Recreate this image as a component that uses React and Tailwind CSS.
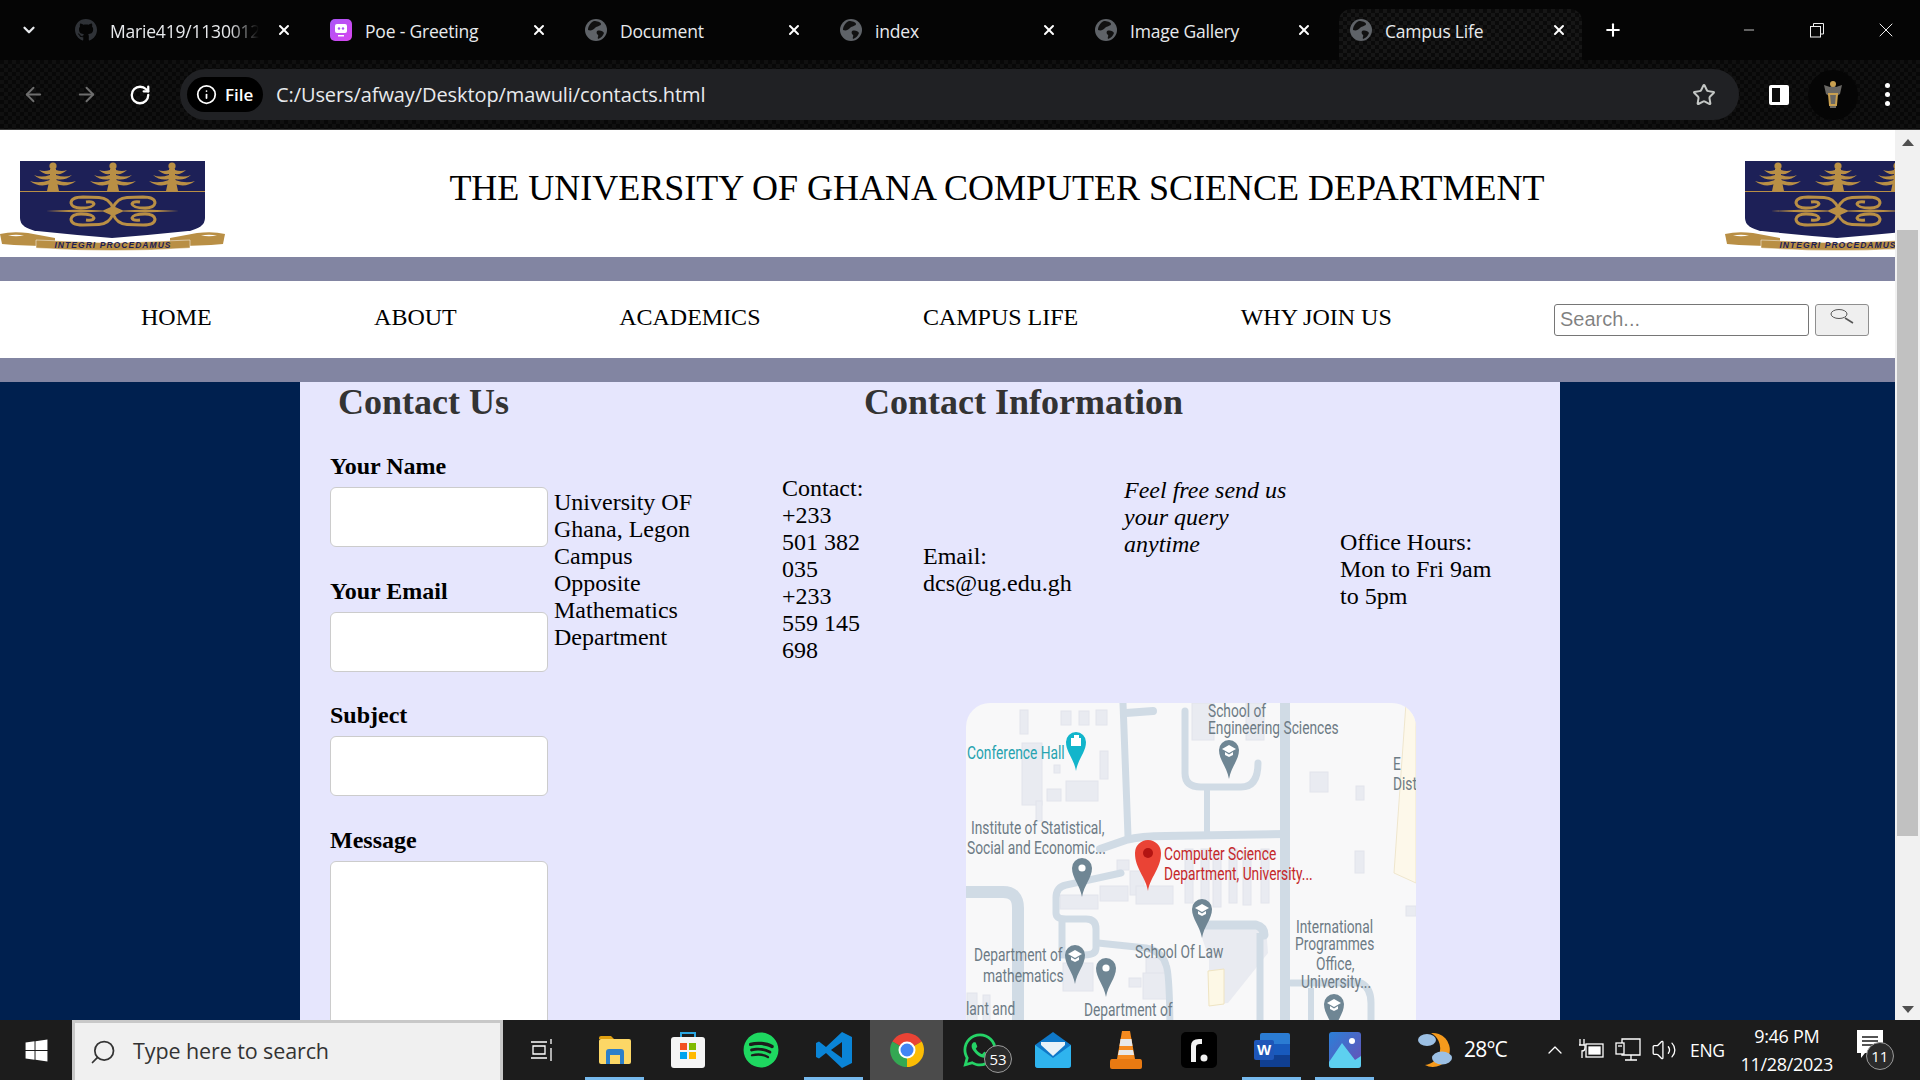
import React from 'react';
import { FaGithub, FaSpotify, FaWhatsapp, FaWindows } from 'react-icons/fa';
import { ArrowLeft, ArrowRight, RotateCw, X, Plus, Star, Minus, ChevronDown, ChevronUp, Search, Info, Volume2 } from 'lucide-react';

const Globe = () => (
  <svg width="22" height="22" viewBox="0 0 22 22">
    <circle cx="11" cy="11" r="11" fill="#5f6368" />
    <path d="M9 2c3 0 7 1 7 3s-4 2-6 4c-2 2-4 3-7 2 0-4 3-8 6-9zM12 12c3-1 6 0 7 2-1 3-3 5-6 6-1-2 1-3 0-4-1-1-2-2-1-4z" fill="#111" />
  </svg>
);

const PoeIcon = () => (
  <svg width="22" height="22" viewBox="0 0 22 22">
    <defs>
      <linearGradient id="poeg" x1="0" y1="0" x2="1" y2="1">
        <stop offset="0" stopColor="#a855f7" />
        <stop offset="1" stopColor="#d946ef" />
      </linearGradient>
    </defs>
    <rect width="22" height="22" rx="5" fill="url(#poeg)" />
    <rect x="5" y="5" width="12" height="9" rx="2" fill="#fff" />
    <circle cx="9" cy="9.5" r="1.2" fill="#a855f7" />
    <circle cx="13" cy="9.5" r="1.2" fill="#a855f7" />
    <path d="M8 16h6v1.5H8z" fill="#fff" />
  </svg>
);

const tabs = [
  { title: 'Marie419/1130012', icon: <FaGithub size={24} color="#2f3237" />, fade: true },
  { title: 'Poe - Greeting', icon: <PoeIcon /> },
  { title: 'Document', icon: <Globe /> },
  { title: 'index', icon: <Globe /> },
  { title: 'Image Gallery', icon: <Globe /> },
  { title: 'Campus Life', icon: <Globe />, active: true },
];

const TabBar = () => (
  <div className="flex h-[60px] shrink-0 items-end bg-[#050505] text-[#e8eaed]">
    <div className="flex h-[51px] w-[64px] shrink-0 items-center justify-center pb-[9px] pr-[6px]">
      <ChevronDown size={18} strokeWidth={3} />
    </div>
    {tabs.map((tab) => (
      <div key={tab.title} className={`mr-[12px] flex h-[51px] w-[243px] shrink-0 items-center rounded-t-xl pb-[9px] pl-[11px] ${tab.active ? 'bg-[repeating-conic-gradient(#161616_0_25%,#0a0a0a_0_50%)] bg-[length:8px_8px]' : ''}`}>
        <div className="flex w-[22px] shrink-0 justify-center">{tab.icon}</div>
        <span className={`ml-[13px] mt-[2px] w-[149px] overflow-hidden whitespace-nowrap font-['Open_Sans',sans-serif] text-[17.5px] tracking-[-0.2px] ${tab.fade ? '[mask-image:linear-gradient(to_right,#000_80%,transparent)]' : ''}`}>{tab.title}</span>
        <X size={16} strokeWidth={3} className="ml-[17px] text-white" />
      </div>
    ))}
    <div className="flex h-[51px] items-center pb-[9px] pl-[9px] pr-[117px] text-white">
      <Plus size={20} strokeWidth={2.5} />
    </div>
    <div className="flex h-[60px] items-center text-[#eeeeee]">
      <Minus size={16} strokeWidth={1.2} className="ml-[1px]" />
      <svg width="16" height="16" viewBox="0 0 16 16" className="ml-[52px]" fill="none" stroke="currentColor">
        <rect x="1.5" y="4.5" width="10" height="10.5" />
        <path d="M4.5 4.5V1.5h10v10.5h-3" />
      </svg>
      <X size={24} strokeWidth={1} className="ml-[49px]" />
    </div>
  </div>
);

const Toolbar = () => (
  <div className="flex h-[70px] shrink-0 items-start border-b border-[#3a3a3a] bg-[repeating-conic-gradient(#101010_0_25%,#080808_0_50%)] bg-[length:8px_8px] pt-[9px] text-[#e8eaed]">
    <div className="flex h-[51px] items-center">
      <ArrowLeft size={23} className="ml-[22px] text-[#6e6e6e]" />
      <ArrowRight size={23} className="ml-[30px] text-[#6e6e6e]" />
      <RotateCw size={22} strokeWidth={2.5} className="ml-[31px] text-white" />
    </div>
    <div className="ml-[29px] flex h-[51px] w-[1559px] items-center rounded-full bg-[#202124] pl-[7px] pr-[23px]">
      <div className="flex h-[35px] w-[76px] items-center rounded-full bg-black pl-[9px] text-white">
        <Info size={21} />
        <span className="ml-[8px] font-['Open_Sans',sans-serif] text-[17px] font-semibold">File</span>
      </div>
      <span className="ml-[13px] font-['Open_Sans',sans-serif] text-[20px] tracking-[-0.09px]">C:/Users/afway/Desktop/mawuli/contacts.html</span>
      <Star size={24} strokeWidth={2} className="ml-auto text-[#c4c7c5]" />
    </div>
    <div className="flex h-[51px] items-center">
      <svg width="22" height="22" viewBox="0 0 22 22" className="ml-[29px]">
        <rect x="1" y="1" width="20" height="20" rx="2" fill="#fff" />
        <rect x="4" y="4" width="8" height="14" fill="#0c0c0c" />
      </svg>
      <div className="ml-[18px] flex h-[50px] w-[50px] items-center justify-center rounded-full bg-[#050505]">
        <svg width="24" height="32" viewBox="0 0 24 32">
          <path d="M3 6l6 2 3-2 3 2 6-2-2 9-3 2-1 12h-6l-1-12-3-2z" fill="#6a6864" />
          <circle cx="12" cy="5" r="3" fill="#c9a050" />
          <path d="M8 15h8l-1 11h-6z" fill="none" stroke="#c9a050" strokeWidth="2" />
        </svg>
      </div>
      <div className="ml-[27px] flex flex-col gap-[4px]">
        <span className="h-[5px] w-[5px] rounded-full bg-white" />
        <span className="h-[5px] w-[5px] rounded-full bg-white" />
        <span className="h-[5px] w-[5px] rounded-full bg-white" />
      </div>
    </div>
  </div>
);

const Tree = ({ x }) => (
  <g transform={`translate(${x} 0)`} fill="#b98f45">
    <circle cx="0" cy="5" r="3.6" />
    <path d="M-6 30 L-3 16 L-3 8 L3 8 L3 16 L6 30 Z" />
    <path d="M-3 9 Q-9 11 -14 9 Q-9 14 -3 13 Z M3 9 Q9 11 14 9 Q9 14 3 13 Z" />
    <path d="M-3 14 Q-12 17 -19 14 Q-12 20 -3 18 Z M3 14 Q12 17 19 14 Q12 20 3 18 Z" />
    <path d="M-3 19 Q-14 23 -23 20 Q-14 27 -3 23 Z M3 19 Q14 23 23 20 Q14 27 3 23 Z" />
  </g>
);

const Swirl = ({ sx, sy }) => (
  <g transform={`translate(113 50) scale(${sx} ${sy})`} fill="none" stroke="#b98f45" strokeWidth="3">
    <path d="M0 -3Q4 -13 14 -13.5L30 -14Q42 -14 42 -8Q41 -3 32 -3Q20 -3 19 -7Q20 -10 27 -9" />
  </g>
);

const Crest = () => (
  <svg width="225" height="90" viewBox="0 0 225 90" className="block shrink-0">
    <path d="M20 0H205V57Q205 67 188 70Q150 74 112 77Q75 74 37 70Q20 67 20 57Z" fill="#1d2057" />
    <rect x="20" y="30" width="185" height="1" fill="#b98f45" />
    <Tree x={53} />
    <Tree x={113} />
    <Tree x={172} />
    <Swirl sx={1} sy={1} />
    <Swirl sx={-1} sy={1} />
    <Swirl sx={1} sy={-1} />
    <Swirl sx={-1} sy={-1} />
    <path d="M46 50L80 48.5L103 49.5L113 45L123 49.5L146 48.5L179 50L146 51.5L123 50.5L113 55L103 50.5L80 51.5Z" fill="#b98f45" />
    <path d="M0 73Q12 70 28 72L55 77V85Q25 85 2 83Z" fill="#b98f45" />
    <path d="M225 73Q213 70 197 72L170 77V85Q200 85 223 83Z" fill="#b98f45" />
    <path d="M8 74.5Q16 73 24 74.5Q16 76 8 74.5ZM201 74.5Q209 73 217 74.5Q209 76 201 74.5Z" fill="#fff" />
    <path d="M36 79L113 82L190 79V87Q113 92 36 87Z" fill="#b98f45" stroke="#fff" strokeWidth="0.5" />
    <text x="113" y="87" textAnchor="middle" fontFamily="Liberation Sans, sans-serif" fontSize="8.5" fontWeight="700" fontStyle="italic" letterSpacing="1.05" fill="#1d2057">INTEGRI PROCEDAMUS</text>
  </svg>
);

const Bar = () => <div className="h-[24px] shrink-0 bg-[#8285a2]" />;

const navItems = ['HOME', 'ABOUT', 'ACADEMICS', 'CAMPUS LIFE', 'WHY JOIN US'];

const Nav = () => (
  <div className="flex h-[77px] shrink-0 items-center bg-white pb-[5px] pl-[141px] pr-[26px]">
    <div className="flex gap-[162.4px] text-[24px] text-black">
      {navItems.map((item) => (
        <span key={item} className="whitespace-nowrap">{item}</span>
      ))}
    </div>
    <div className="ml-auto mt-[5px] flex gap-[6px]">
      <input placeholder="Search..." className="h-[32px] w-[255px] rounded-[3px] border border-[#767676] bg-white px-[5px] font-['Liberation_Sans',sans-serif] text-[20px]" />
      <div className="flex h-[32px] w-[54px] items-start justify-center rounded-[3px] border border-[#8f8f8f] bg-[#efefef] pt-[4px]">
        <svg width="24" height="15" viewBox="0 0 24 15" fill="none" stroke="#555555" strokeWidth="1">
          <ellipse cx="9" cy="5" rx="8" ry="4.5" />
          <path d="M15 9L23 14" strokeWidth="1.5" />
        </svg>
      </div>
    </div>
  </div>
);

const fields = ['Your Name', 'Your Email', 'Subject'];

const ContactForm = () => (
  <div className="w-[224px] shrink-0">
    <h2 className="ml-[8px] whitespace-nowrap text-[36px] font-bold leading-[37px] text-[#333333]">Contact Us</h2>
    <div className="mt-[32px]">
      {fields.map((label) => (
        <div key={label} className="mb-[30.5px]">
          <div className="mb-[7px] text-[24px] font-bold leading-[27px] text-black">{label}</div>
          <div className="h-[60px] w-[218px] rounded-[6px] border border-[#cccccc] bg-white" />
        </div>
      ))}
      <div className="mb-[7px] text-[24px] font-bold leading-[27px] text-black">Message</div>
      <div className="h-[240px] w-[218px] rounded-[6px] border border-[#cccccc] bg-white" />
    </div>
  </div>
);

const Pin = ({ x, y, color = '#6f8694', children }) => (
  <g transform={`translate(${x} ${y})`}>
    <path d="M0 28C-2 16 -10 9 -10 -1A10 10 0 0 1 10 -1C10 9 2 16 0 28Z" fill={color} />
    {children || <circle cx="0" cy="-1" r="3.6" fill="#fff" />}
  </g>
);

const Cap = () => (
  <path d="M-7 -2L0 -6L7 -2L0 2ZM-4 1L0 3.5L4 1V4L0 6L-4 4Z" fill="#fff" />
);

const buildings = [
  [54, 7, 8, 24], [95, 8, 10, 14], [113, 8, 10, 14], [130, 7, 11, 15],
  [56, 40, 20, 62], [88, 62, 6, 8], [81, 86, 14, 12], [100, 78, 32, 20],
  [134, 48, 8, 28], [70, 98, 6, 20], [226, 0, 22, 37], [280, 0, 18, 37],
  [344, 69, 18, 20], [390, 83, 8, 14], [389, 148, 9, 22], [151, 157, 12, 10],
  [164, 168, 14, 24], [134, 183, 28, 15], [170, 183, 37, 18], [219, 146, 8, 54],
  [235, 146, 8, 54], [247, 150, 8, 54], [263, 146, 8, 54], [277, 148, 8, 54],
  [295, 146, 8, 54], [94, 192, 38, 14], [97, 260, 30, 28], [180, 255, 18, 26],
  [163, 275, 12, 9], [177, 270, 26, 26], [1, 290, 10, 30], [17, 292, 7, 28], [440, 203, 10, 10],
];

const mapText = "'Roboto',sans-serif";

const MapLabel = ({ x, y, color = '#6d7b85', children }) => (
  <text x={x} y={y} fontFamily={mapText} fontSize="18.5" fill={color} transform={`translate(${x} 0) scale(0.745 1) translate(${-x} 0)`}>{children}</text>
);

const CampusMap = () => (
  <div className="ml-[412px] mt-[39px] h-[360px] w-[450px] overflow-hidden rounded-[24px] bg-[#f8f8f9]">
    <svg width="450" height="360" viewBox="0 0 450 360" className="block">
      <path d="M440 0L450 0V180L428 170Z" fill="#fdf8ea" stroke="#efe6cd" />
      {buildings.map(([x, y, w, h]) => (
        <rect key={`${x}-${y}`} x={x} y={y} width={w} height={h} fill="#e9ebf1" stroke="#e2e4ec" />
      ))}
      <path d="M233 226L300 224L302 250L262 300L243 302V255Z" fill="#e9ebf1" />
      <path d="M242 268L258 266V301L243 303Z" fill="#fdf8e6" stroke="#efe4c2" />
      <g fill="none" stroke="#d0dbe5" strokeLinecap="round" strokeLinejoin="round">
        <path d="M157 0L162 133" strokeWidth="7" />
        <path d="M160 10L187 8" strokeWidth="8" />
        <path d="M219 8V70Q219 84 235 84H275Q292 84 292 60" strokeWidth="7" />
        <path d="M241 87V130" strokeWidth="6" />
        <path d="M134 146L160 137Q175 133 200 133L318 131" strokeWidth="8" />
        <path d="M319 0V340" strokeWidth="10" strokeLinecap="butt" />
        <path d="M0 189H37Q52 189 52 205V340" strokeWidth="12" strokeLinecap="butt" />
        <path d="M155 170L100 182Q90 184 90 195V210Q90 216 100 216H120Q130 216 130 226V245Q130 252 118 252H96V216" strokeWidth="7" />
        <path d="M132 240L180 245Q196 248 200 262Q204 270 204 340" strokeWidth="7" />
        <path d="M240 222H290Q298 224 298 232" strokeWidth="9" />
        <path d="M294 230V340" strokeWidth="7" strokeLinecap="butt" />
        <path d="M325 280H395Q405 285 405 300V340" strokeWidth="7" />
        <path d="M345 285V340" strokeWidth="6" strokeLinecap="butt" />
      </g>

      <MapLabel x={242} y={14}>School of</MapLabel>
      <MapLabel x={242} y={31}>Engineering Sciences</MapLabel>
      <MapLabel x={1} y={56} color="#26a3b0">Conference Hall</MapLabel>
      <MapLabel x={5} y={131}>Institute of Statistical,</MapLabel>
      <MapLabel x={1} y={151}>Social and Economic...</MapLabel>
      <MapLabel x={198} y={157} color="#c5282b">Computer Science</MapLabel>
      <MapLabel x={198} y={177} color="#c5282b">Department, University...</MapLabel>
      <MapLabel x={8} y={258}>Department of</MapLabel>
      <MapLabel x={17} y={279}>mathematics</MapLabel>
      <MapLabel x={169} y={255}>School Of Law</MapLabel>
      <MapLabel x={330} y={230}>International</MapLabel>
      <MapLabel x={329} y={247}>Programmes</MapLabel>
      <MapLabel x={350} y={267}>Office,</MapLabel>
      <MapLabel x={335} y={285}>University...</MapLabel>
      <MapLabel x={427} y={67}>E</MapLabel>
      <MapLabel x={427} y={87}>Dist</MapLabel>
      <MapLabel x={0} y={312}>lant and</MapLabel>
      <MapLabel x={118} y={313}>Department of</MapLabel>

      <Pin x={110} y={40} color="#12b5cb">
        <path d="M-5 3V-5H-2V-8H3V-5H5V3Z" fill="#fff" />
      </Pin>
      <Pin x={263} y={48}><Cap /></Pin>
      <Pin x={116} y={166} />
      <Pin x={236} y={207}><Cap /></Pin>
      <Pin x={109} y={253}><Cap /></Pin>
      <Pin x={140} y={266} />
      <Pin x={368} y={302}><Cap /></Pin>
      <g transform="translate(182 156)">
        <path d="M0 32C-2 18 -13 10 -13 -6A13 13 0 0 1 13 -6C13 10 2 18 0 32Z" fill="#ea4335" />
        <circle cx="0" cy="-6" r="5" fill="#b31412" />
      </g>
    </svg>
  </div>
);

const ContactInfo = () => (
  <div className="min-w-0 flex-1">
    <h2 className="whitespace-nowrap pl-[310px] text-[36px] font-bold leading-[37px] text-[#333333]">Contact Information</h2>
    <div className="mt-[54px] flex items-center text-[24px] leading-[27px] text-black">
      <div className="w-[228px] shrink-0"><div className="w-[155px]">University OF Ghana, Legon Campus Opposite Mathematics Department</div></div>
      <div className="w-[141px] shrink-0"><div className="w-[84px]">Contact: +233 501 382 035 +233 559 145 698</div></div>
      <div className="w-[201px] shrink-0"><div className="w-[160px]">Email: dcs@ug.edu.gh</div></div>
      <div className="w-[216px] shrink-0 self-start pt-[2px] italic"><div className="w-[170px]">Feel free send us your query anytime</div></div>
      <div className="w-[160px] shrink-0">Office Hours: Mon to Fri 9am to 5pm</div>
    </div>
    <CampusMap />
  </div>
);

const Scrollbar = () => (
  <div className="flex w-[25px] shrink-0 flex-col items-center bg-[#f1f1f1] text-[#505050]">
    <div className="flex h-[25px] items-center">
      <svg width="12" height="7" viewBox="0 0 12 7" fill="currentColor"><path d="M0 7L6 0L12 7Z" /></svg>
    </div>
    <div className="mt-[75px] h-[606px] w-[21px] bg-[#c1c1c1]" />
    <div className="mt-auto flex h-[22px] items-center">
      <svg width="12" height="7" viewBox="0 0 12 7" fill="currentColor"><path d="M0 0L6 7L12 0Z" /></svg>
    </div>
  </div>
);

const Page = () => (
  <div className="flex min-h-0 flex-1 overflow-hidden font-['Liberation_Serif',serif]">
    <div className="min-w-0 flex-1 overflow-hidden bg-[#00204f]">
      <div className="flex h-[127px] overflow-hidden bg-white pt-[31px]">
        <Crest />
        <h1 className="w-[1500px] shrink-0 pl-[44px] pt-[6px] text-center text-[36px] font-normal leading-[42px] text-black">THE UNIVERSITY OF GHANA COMPUTER SCIENCE DEPARTMENT</h1>
        <Crest />
      </div>
      <Bar />
      <Nav />
      <Bar />
      <div className="ml-[300px] flex h-[900px] w-[1260px] bg-[#e6e6fd] pl-[30px] pt-[2px]">
        <ContactForm />
        <ContactInfo />
      </div>
    </div>
    <Scrollbar />
  </div>
);

const Underline = () => <div className="absolute bottom-0 left-[7px] right-[7px] h-[3px] bg-[#76b9ed]" />;

const Badge = ({ children }) => (
  <div className="absolute bottom-[7px] right-[4px] flex h-[28px] w-[28px] items-center justify-center rounded-full border border-[#9a9a9a] bg-[#2b2b2b] font-['Open_Sans',sans-serif] text-[15px] text-white">{children}</div>
);

const Slot = ({ active, open, children }) => (
  <div className={`relative flex h-[60px] w-[73px] shrink-0 items-center justify-center ${active ? 'bg-[#4b4b4b]' : ''}`}>
    {children}
    {open && <Underline />}
  </div>
);

const ChromeIcon = () => (
  <svg width="36" height="36" viewBox="0 0 36 36">
    <path d="M18 18L3.4 9.5A17 17 0 0 1 32.7 9.5Z" fill="#ea4335" />
    <path d="M18 18L32.7 9.5A17 17 0 0 1 18 35Z" fill="#fbbc04" />
    <path d="M18 18V35A17 17 0 0 1 3.4 9.5Z" fill="#34a853" />
    <circle cx="18" cy="18" r="8.5" fill="#fff" />
    <circle cx="18" cy="18" r="6.5" fill="#4285f4" />
  </svg>
);

const VsCodeIcon = () => (
  <svg width="36" height="36" viewBox="0 0 36 36">
    <path d="M26 0L36 5V31L26 36L10 21L3 26.5L0 25V11L3 9.5L10 15ZM26 10L15 18L26 26Z" fill="#0a84d6" />
  </svg>
);

const Taskbar = () => (
  <div className="flex h-[60px] shrink-0 items-center bg-[#1c1c1c] font-['Open_Sans',sans-serif] text-white">
    <div className="flex w-[72px] shrink-0 justify-center">
      <FaWindows size={25} color="#fff" />
    </div>
    <div className="flex h-[60px] w-[431px] shrink-0 items-center border-[3px] border-b-0 border-[#c8c8c8] bg-[#f0f0f0] pl-[14px] text-[#333333]">
      <Search size={28} strokeWidth={1.5} className="scale-x-[-1]" />
      <span className="ml-[16px] whitespace-nowrap text-[21.5px] tracking-[-0.1px]">Type here to search</span>
    </div>
    <div className="flex w-[75px] shrink-0 justify-center">
      <svg width="24" height="24" viewBox="0 0 24 24" fill="none" stroke="#fff" strokeWidth="1.3">
        <path d="M2 4H18M4 8H16V16H4ZM2 20H18M22 1V6M22 10V23" />
      </svg>
    </div>
    <Slot open>
      <svg width="32" height="30" viewBox="0 0 32 30">
        <path d="M0 3Q0 1 2 1H12L15 4H0Z" fill="#e0a010" />
        <rect y="4" width="32" height="25" rx="2" fill="#fcd766" />
        <path d="M7 29V17Q7 14 10 14H22Q25 14 25 17V29H21V20H11V29Z" fill="#2c7fc9" />
      </svg>
    </Slot>
    <Slot>
      <svg width="34" height="38" viewBox="0 0 34 38">
        <path d="M10 6V2H24V6" fill="none" stroke="#2aa5e0" strokeWidth="2" />
        <rect y="6" width="34" height="31" rx="3" fill="#f4f4f4" />
        <rect x="9" y="12" width="7" height="7" fill="#f25022" />
        <rect x="18" y="12" width="7" height="7" fill="#7fba00" />
        <rect x="9" y="21" width="7" height="7" fill="#00a4ef" />
        <rect x="18" y="21" width="7" height="7" fill="#ffb900" />
      </svg>
    </Slot>
    <Slot><FaSpotify size={36} color="#1ed760" /></Slot>
    <Slot open><VsCodeIcon /></Slot>
    <Slot active><ChromeIcon /></Slot>
    <Slot>
      <FaWhatsapp size={38} color="#25d366" />
      <Badge>53</Badge>
    </Slot>
    <Slot>
      <svg width="36" height="36" viewBox="0 0 36 36">
        <path d="M18 0L36 13V33Q36 36 33 36H3Q0 36 0 33V13Z" fill="#0f78c8" />
        <path d="M0 13L18 26L36 13V33Q36 36 33 36H3Q0 36 0 33Z" fill="#2fb4ee" />
        <path d="M6 10H30V13L18 24L6 13Z" fill="#e8f2f8" />
      </svg>
    </Slot>
    <Slot>
      <svg width="32" height="38" viewBox="0 0 32 38">
        <path d="M12 0H20L25 28H7Z" fill="#f58a1f" />
        <path d="M10.5 8H21.5L22.5 15H9.5ZM9 19H23L24 24H8Z" fill="#e8e8e8" />
        <path d="M2 28H30Q32 28 32 31V36Q32 38 30 38H2Q0 38 0 36V31Q0 28 2 28Z" fill="#e97a12" />
      </svg>
    </Slot>
    <Slot>
      <div className="flex h-[36px] w-[36px] items-center justify-center rounded-[5px] bg-black">
        <svg width="20" height="26" viewBox="0 0 20 26" fill="#f2f2f2">
          <path d="M2 25V9Q2 2 10 2H13V7H11Q7 7 7 10V25Z" />
          <circle cx="15" cy="21" r="3.5" />
        </svg>
      </div>
    </Slot>
    <Slot open>
      <svg width="36" height="36" viewBox="0 0 36 36">
        <rect x="6" y="1" width="30" height="34" rx="2" fill="#2b7cd3" />
        <rect x="6" y="12" width="30" height="11" fill="#185abd" />
        <rect x="6" y="23" width="30" height="12" fill="#103f91" />
        <rect y="8" width="20" height="20" rx="2" fill="#1e56b8" />
        <text x="10" y="23" textAnchor="middle" fontFamily="Liberation Sans, sans-serif" fontSize="15" fontWeight="700" fill="#fff">W</text>
      </svg>
    </Slot>
    <Slot open>
      <svg width="32" height="36" viewBox="0 0 32 36">
        <defs>
          <linearGradient id="phg" x1="0" y1="0" x2="1" y2="1">
            <stop offset="0" stopColor="#2b80d8" />
            <stop offset="1" stopColor="#6a4fb5" />
          </linearGradient>
        </defs>
        <rect width="32" height="36" rx="3" fill="url(#phg)" />
        <circle cx="23" cy="9" r="3" fill="#fff" />
        <path d="M0 30L13 11L26 28L32 24V33Q32 36 29 36H3Q0 36 0 33Z" fill="#5dd0f0" />
      </svg>
    </Slot>
    <div className="ml-[36px] flex w-[36px] shrink-0 justify-center">
      <svg width="36" height="36" viewBox="0 0 36 36">
        <path d="M14 1A17 17 0 1 1 8 33A17 17 0 0 0 14 1Z" fill="#f59a1c" />
        <ellipse cx="10" cy="8" rx="9" ry="6" fill="#9cc0e4" />
        <ellipse cx="25" cy="26" rx="10" ry="6.5" fill="#9cc0e4" />
      </svg>
    </div>
    <span className="ml-[11px] text-[21px] tracking-[-0.8px]">28°C</span>
    <ChevronUp size={24} strokeWidth={1.3} className="ml-[36px]" />
    <svg width="26" height="24" viewBox="0 0 26 24" className="ml-[11px]" fill="none" stroke="#fff" strokeWidth="1.3">
      <path d="M2 1V7M6 1V7M1 7H7V10Q7 13 4 13V20" />
      <rect x="8" y="6" width="17" height="13" fill="#1c1c1c" />
      <rect x="11" y="9" width="11" height="7" fill="#fff" />
    </svg>
    <svg width="26" height="24" viewBox="0 0 26 24" className="ml-[11px]" fill="none" stroke="#fff" strokeWidth="1.3">
      <path d="M7 1H25V17H7ZM16 17V22M10 22H22" />
      <rect x="1" y="5" width="8" height="11" fill="#1c1c1c" />
      <path d="M3 8H7" />
    </svg>
    <Volume2 size={26} strokeWidth={1.2} className="ml-[10px]" />
    <span className="ml-[13px] text-[17.5px] tracking-[-0.3px]">ENG</span>
    <div className="ml-[14px] flex w-[96px] shrink-0 flex-col items-center text-[18px] leading-[28px] tracking-[-0.3px]">
      <span>9:46 PM</span>
      <span>11/28/2023</span>
    </div>
    <div className="relative ml-[22px] h-[40px] w-[30px] shrink-0">
      <svg width="26" height="30" viewBox="0 0 26 30">
        <path d="M0 0H26V23H8L4 28V23H0Z" fill="#fff" />
        <path d="M5 7H21M5 11H21M5 15H21" stroke="#1c1c1c" strokeWidth="1.3" />
      </svg>
      <div className="absolute left-[9px] top-[12px] flex h-[28px] w-[28px] items-center justify-center rounded-full border border-[#9a9a9a] bg-[#2b2b2b] text-[15px]">11</div>
    </div>
  </div>
);

export default function App() {
  return (
    <div className="flex h-screen w-full flex-col overflow-hidden">
      <TabBar />
      <Toolbar />
      <Page />
      <Taskbar />
    </div>
  );
}
